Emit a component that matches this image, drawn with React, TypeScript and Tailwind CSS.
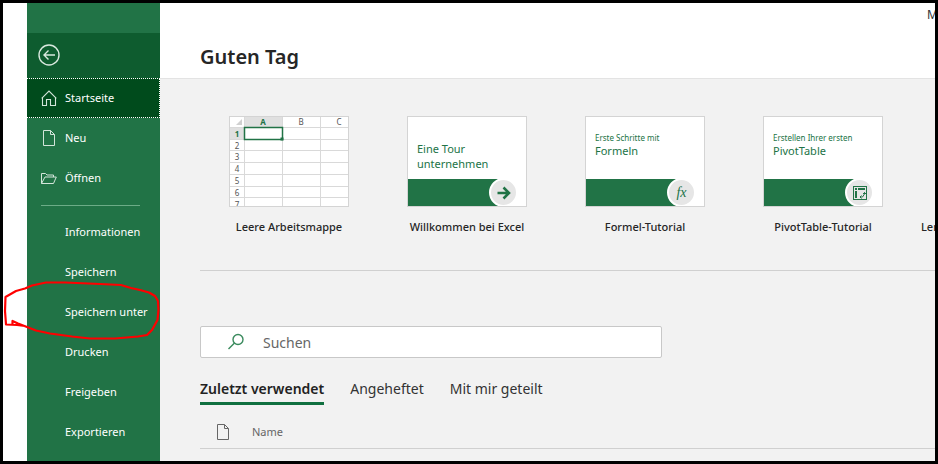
import type { ReactNode } from "react";

function PageIcon({ className }: { className: string }) {
  return (
    <svg className={className} width="14" height="18" viewBox="0 0 14 18" fill="none" stroke="currentColor" aria-hidden="true">
      <path d="M1.5 1.5H8.5L12.5 5.5V16.5H1.5Z" />
      <path d="M8.5 1.5V5.5H12.5" />
    </svg>
  );
}

function HomeIcon() {
  return (
    <svg width="16" height="17" viewBox="0 0 16 17" fill="none" stroke="currentColor" strokeWidth="1.1" aria-hidden="true">
      <path d="M0.7 8.3L8 1L15.3 8.3" />
      <path d="M1.5 7.5V15.5H5.5V9.5H9.5V15.5H14.5V7.5" />
    </svg>
  );
}

function FolderIcon() {
  return (
    <svg width="16" height="13" viewBox="0 0 16 13" fill="none" stroke="currentColor" aria-hidden="true">
      <path d="M0.5 11.5V1.5H4.5L6 3H12.5V5" />
      <path d="M0.5 11.5L4 5H15.3L12.5 11.5Z" />
    </svg>
  );
}

function NavItem({ label, icon, active }: { label: string; icon?: ReactNode; active?: boolean }) {
  return (
    <button
      type="button"
      className={
        active
          ? "flex h-10 w-full items-center border border-l-0 border-dotted border-white bg-[#004b1c] pl-[14px] text-left"
          : "flex h-10 w-full items-center pl-[14px] text-left"
      }
    >
      <span className="flex w-6 shrink-0 items-center text-[#d3e5da]">{icon}</span>
      <span className="whitespace-nowrap">{label}</span>
    </button>
  );
}

function Template({ label, children }: { label: string; children: ReactNode }) {
  return (
    <button type="button" className="flex w-[178px] shrink-0 flex-col items-center gap-[10px]">
      <span className="block h-[91px] w-[120px] overflow-hidden border border-[#d4d4d4] bg-white">{children}</span>
      <span className="text-[11px] leading-5 font-medium whitespace-nowrap text-[#262626]">{label}</span>
    </button>
  );
}

function SheetPreview() {
  const rows = [1, 2, 3, 4, 5, 6, 7];
  return (
    <svg width="118" height="89" viewBox="0 0 118 89" fontFamily="'Noto Sans', sans-serif" fontSize="8" textAnchor="middle" aria-hidden="true">
      <rect width="118" height="89" fill="#fff" />
      <rect x="14" width="38" height="10" fill="#e0e0e0" />
      <rect y="11" width="14" height="11" fill="#e0e0e0" />
      <path d="M12 2V8H6Z" fill="#d0d0d0" />
      <path d="M14.5 0V89M52.5 0V89M90.5 0V89M0 10.5H118M0 22.5H118M0 33.5H118M0 45.5H118M0 57.5H118M0 69.5H118M0 80.5H118" stroke="#d9d9d9" />
      <rect x="14.5" y="10.5" width="38" height="12" fill="#fff" stroke="#217346" strokeWidth="1.5" />
      <rect x="50.5" y="20.5" width="3" height="3" fill="#217346" />
      <text x="33" y="8" fill="#217346" fontWeight="700">A</text>
      <text x="71" y="8" fill="#555">B</text>
      <text x="109" y="8" fill="#555">C</text>
      {rows.map((n) => (
        <text key={n} x="7" y={8 + n * 11.8} fill={n === 1 ? "#217346" : "#555"} fontWeight={n === 1 ? 700 : 400}>
          {n}
        </text>
      ))}
    </svg>
  );
}

function TourPreview({ small, large, icon }: { small?: string; large: ReactNode; icon: ReactNode }) {
  return (
    <span className="flex h-full flex-col text-left text-[#217346]">
      <span className={small ? "flex h-[62px] flex-col pt-[15px] pl-[9px] whitespace-nowrap" : "flex h-[62px] flex-col pt-6 pl-[9px] whitespace-nowrap"}>
        {small && <span className="text-[8px] leading-[11px]">{small}</span>}
        <span className="text-[11px] leading-[15px]">{large}</span>
      </span>
      <span className="flex h-[27px] items-center bg-[linear-gradient(90deg,#217346_94px,#fff_94px)] pl-[81px]">
        <span className="flex h-[29px] w-[29px] shrink-0 items-center justify-center rounded-full border-2 border-white bg-[#e6e6e6]">
          {icon}
        </span>
      </span>
    </span>
  );
}

function Tab({ label, active }: { label: string; active?: boolean }) {
  return (
    <button
      type="button"
      role="tab"
      aria-selected={active ? true : false}
      className={
        active
          ? "border-b-3 border-[#107040] pb-[3px] font-semibold text-[#222]"
          : "border-b-3 border-transparent pb-[3px] text-[#333]"
      }
    >
      {label}
    </button>
  );
}

export default function App() {
  return (
    <div className="flex h-screen w-full overflow-hidden border-3 border-black bg-white pl-6 font-['Noto_Sans','Open_Sans',sans-serif] text-[11px]">
      <aside className="relative w-[133px] shrink-0 bg-[#217346] text-white">
        <div className="mt-[30px] flex h-[45px] items-center bg-[#0e5c2f] pb-[2px] pl-[11px]">
          <button type="button" aria-label="Zurück">
            <svg width="22" height="22" viewBox="0 0 22 22" fill="none" stroke="#d8e8de" strokeWidth="1.4" aria-hidden="true">
              <circle cx="11" cy="11" r="10" />
              <path d="M17 11H6M10.5 6.5L6 11L10.5 15.5" />
            </svg>
          </button>
        </div>
        <nav>
          <NavItem label="Startseite" icon={<HomeIcon />} active />
          <NavItem label="Neu" icon={<PageIcon className="ml-px" />} />
          <NavItem label="Öffnen" icon={<FolderIcon />} />
          <hr className="mx-[14px] mt-[7px] mb-[6px] w-[99px] border-[#6cac87]" />
          <NavItem label="Informationen" />
          <NavItem label="Speichern" />
          <NavItem label="Speichern unter" />
          <NavItem label="Drucken" />
          <NavItem label="Freigeben" />
          <NavItem label="Exportieren" />
        </nav>
        <svg className="pointer-events-none absolute top-[277px] -left-[27px]" width="164" height="62" viewBox="0 280 164 62" fill="none" stroke="#ff0000" strokeWidth="2.2" strokeLinecap="round" strokeLinejoin="round" aria-hidden="true">
          <path d="M25 326L17 325L6 324.5L5 311L5.5 297L16 291L25 288.5L32 285.5L46 282.5L65 282.5L100 284L121 285L131 288L140 290L149 292.5L155 296L158 301L158.5 310L157.5 320L152 330L147 335L138 336.5L115 338.5L90 338.5L72 336.5L50 333.5L36 330.5L27 327L18 323.5L12.5 321V324.5" />
        </svg>
      </aside>

      <main className="flex min-w-0 flex-1 flex-col bg-[#f2f2f2]">
        <header className="flex h-[76px] shrink-0 justify-between border-b border-[#e3e3e3] bg-white pl-10">
          <h1 className="mt-10 text-[20px] leading-7 font-semibold text-[#262626]">Guten Tag</h1>
          <span className="mt-1 w-2 text-[12px] leading-4 text-[#333]">M</span>
        </header>

        <section className="ml-10 flex shrink-0 overflow-hidden border-b border-[#d0d0d0] pt-[37px] pb-[33px]">
          <Template label="Leere Arbeitsmappe">
            <SheetPreview />
          </Template>
          <Template label="Willkommen bei Excel">
            <TourPreview
              large={<>Eine Tour<br />unternehmen</>}
              icon={
                <svg width="14" height="14" viewBox="0 0 14 14" fill="none" stroke="#217346" strokeWidth="2.6" aria-hidden="true">
                  <path d="M0.5 7H12M6.5 1.5L12 7L6.5 12.5" />
                </svg>
              }
            />
          </Template>
          <Template label="Formel-Tutorial">
            <TourPreview
              small="Erste Schritte mit"
              large="Formeln"
              icon={<span className="font-['Liberation_Serif',serif] text-[14px] leading-4 italic">fx</span>}
            />
          </Template>
          <Template label="PivotTable-Tutorial">
            <TourPreview
              small="Erstellen Ihrer ersten"
              large="PivotTable"
              icon={
                <svg width="14" height="14" viewBox="0 0 14 14" fill="none" stroke="#217346" aria-hidden="true">
                  <rect x="0.5" y="0.5" width="13" height="13" />
                  <path d="M2 3H4M5 3H12M3 5V12" strokeWidth="2" />
                  <path d="M7 11H9.5L11.5 8V6.5M10 8L11.5 6.5L13 8M8.5 9.5L7 11L8.5 12.5" />
                </svg>
              }
            />
          </Template>
          <button type="button" className="w-[178px] shrink-0 pt-[101px] pl-[9px] text-left leading-5 font-medium text-[#262626]">
            Lernen
          </button>
        </section>

        <section className="flex flex-col pt-[55px] pl-10">
          <label className="flex h-8 w-[462px] items-center rounded-xs border border-[#c8c8c8] bg-white pl-[26px]">
            <svg width="18" height="18" viewBox="0 0 18 18" fill="none" stroke="#3a8a5d" strokeWidth="1.4" aria-hidden="true">
              <circle cx="11" cy="6.5" r="5" />
              <path d="M7.5 10L1.5 16" />
            </svg>
            <input
              type="search"
              aria-label="Suchen"
              placeholder="Suchen"
              className="ml-[18px] min-w-0 flex-1 bg-transparent text-[14px] outline-none placeholder:text-[#666]"
            />
          </label>
          <div role="tablist" className="mt-[21px] flex gap-[26px] text-[14px] leading-5">
            <Tab label="Zuletzt verwendet" active />
            <Tab label="Angeheftet" />
            <Tab label="Mit mir geteilt" />
          </div>
          <table className="mt-[11px] w-full border-b border-[#d0d0d0] text-left text-[11px] text-[#666]">
            <thead>
              <tr className="h-8">
                <th className="w-[52px] pl-4" aria-label="Dateityp">
                  <PageIcon className="" />
                </th>
                <th className="font-normal">Name</th>
              </tr>
            </thead>
          </table>
        </section>
      </main>
    </div>
  );
}
